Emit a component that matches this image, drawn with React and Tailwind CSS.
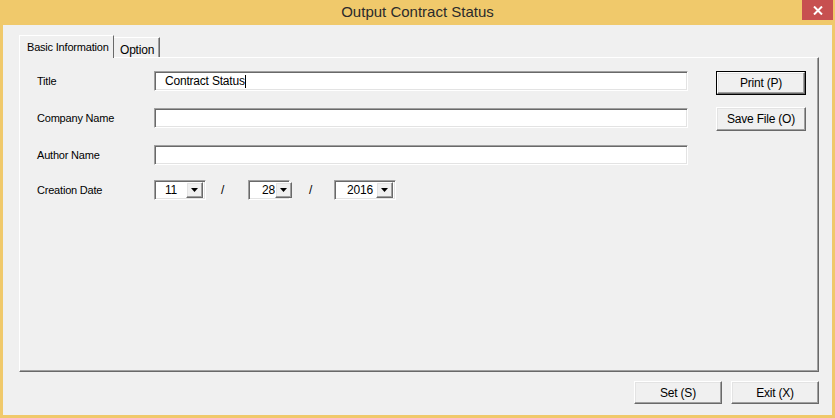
import React from 'react';

const sunken =
  'border border-t-[#a0a0a0] border-l-[#a0a0a0] border-b-white border-r-white shadow-[inset_1px_1px_0_#696969,inset_-1px_-1px_0_#e3e3e3] bg-white';
const raised =
  'border border-t-white border-l-white border-b-[#696969] border-r-[#696969] shadow-[inset_-1px_-1px_0_#a0a0a0,inset_1px_1px_0_#e3e3e3] bg-[#f0f0f0]';

function TextField({ value }) {
  return (
    <div className={`${sunken} h-[20px] w-[534px] flex items-center pl-[10px] text-[12px] tracking-[-0.2px]`}>
      {value && <span>{value}</span>}
      {value && <span className="w-px h-[13px] bg-black" />}
    </div>
  );
}

function Combo({ value, width, pad }) {
  return (
    <div className={`${sunken} h-[20px] flex items-center pr-[2px] shrink-0`} style={{ width }}>
      <span className="flex-1 text-[12px]" style={{ paddingLeft: pad }}>
        {value}
      </span>
      <div className={`${raised} w-[17px] h-[16px] shrink-0 flex items-center justify-center`}>
        <svg width="7" height="4" viewBox="0 0 7 4">
          <path d="M0 0h7L3.5 4z" fill="#000" />
        </svg>
      </div>
    </div>
  );
}

function Btn({ children, def, className = '' }) {
  return (
    <div className={`${def ? 'border border-black' : ''} ${className}`}>
      <div className={`${raised} h-full w-full flex items-center justify-center text-[12px] tracking-[-0.2px]`}>
        {children}
      </div>
    </div>
  );
}

export default function App() {
  return (
    <div className="w-[835px] h-[418px] bg-[#f0c96b] flex flex-col px-[3px] pb-[3px] font-['Liberation_Sans',Arial,sans-serif] text-black">
      {/* title bar */}
      <div className="h-[25px] relative flex items-center justify-center">
        <span className="text-[15px] text-[#2b2b2b] pb-[1px]">Output Contract Status</span>
        <div className="absolute right-[-1px] top-0 w-[31px] h-[20px] bg-[#c75050] flex items-center justify-center">
          <svg width="10" height="9" viewBox="0 0 10 9">
            <path d="M1 0.5l8 8M9 0.5l-8 8" stroke="#fff" strokeWidth="2" />
          </svg>
        </div>
      </div>

      <div className="flex-1 bg-[#f0f0f0] flex flex-col pl-[16px] pr-[13px] pt-[10px] pb-[11px]">
        {/* tabs */}
        <div className="flex items-end h-[22px] relative z-10">
          <div className="h-[23px] w-[95px] border-t border-l border-white border-r border-r-[#696969] bg-[#f0f0f0] pl-[7px] pt-[3px] text-[11px] tracking-[-0.2px] whitespace-nowrap mb-[-1px]">
            Basic Information
          </div>
          <div className="h-[20px] w-[46px] border-t border-white border-r border-r-[#696969] shadow-[inset_-1px_0_0_#a0a0a0] pl-[6px] pt-[3px] text-[12px] tracking-[-0.2px] whitespace-nowrap">
            Option
          </div>
        </div>

        {/* panel */}
        <div className="h-[315px] w-[800px] border border-t-white border-l-white border-r-[#696969] border-b-[#696969] shadow-[inset_-1px_-1px_0_#a0a0a0] flex pt-[13px] pl-[17px]">
          <div className="flex flex-col gap-[17px] text-[11px] tracking-[-0.2px]">
            <div className="flex items-center h-[20px]">
              <span className="w-[117px] pt-[1px]">Title</span>
              <TextField value="Contract Status" />
            </div>
            <div className="flex items-center h-[20px]">
              <span className="w-[117px] pt-[1px]">Company Name</span>
              <TextField />
            </div>
            <div className="flex items-center h-[20px]">
              <span className="w-[117px] pt-[1px]">Author Name</span>
              <TextField />
            </div>
            <div className="flex items-center h-[20px] mt-[-2px]">
              <span className="w-[117px] pt-[1px]">Creation Date</span>
              <Combo value="11" width="52px" pad="10px" />
              <span className="w-[42px] pl-[15px] text-[12px]">/</span>
              <Combo value="28" width="42px" pad="13px" />
              <span className="w-[44px] pl-[19px] text-[12px]">/</span>
              <Combo value="2016" width="62px" pad="12px" />
            </div>
          </div>
          <div className="flex flex-col gap-[12px] ml-[28px]">
            <Btn def className="w-[90px] h-[24px]">Print (P)</Btn>
            <Btn className="w-[90px] h-[24px]">Save File (O)</Btn>
          </div>
        </div>

        {/* bottom buttons */}
        <div className="flex justify-end gap-[9px] mt-[9px]">
          <Btn className="w-[88px] h-[23px]">Set (S)</Btn>
          <Btn className="w-[88px] h-[23px]">Exit (X)</Btn>
        </div>
      </div>
    </div>
  );
}
